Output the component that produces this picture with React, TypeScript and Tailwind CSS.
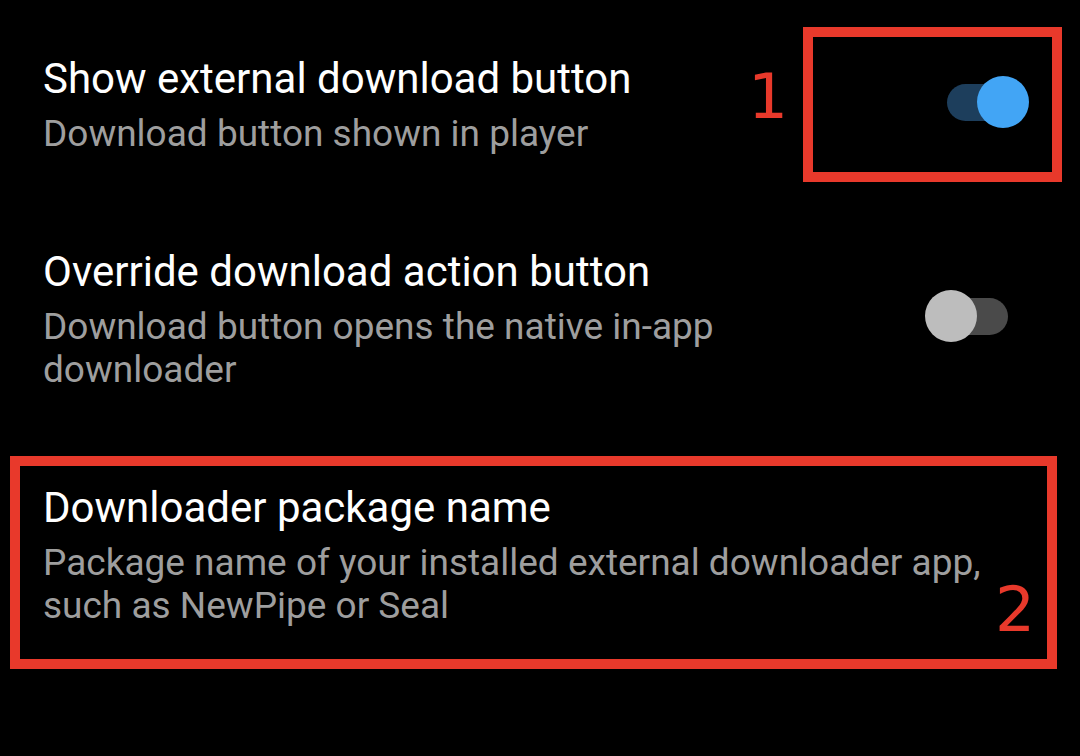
import React from "react";

function Toggle({ on }: { on: boolean }) {
  return on ? (
    <div className="relative w-[84px] h-[52px] flex items-center">
      <div className="ml-[2px] w-[74px] h-[37px] rounded-full bg-[#1d3e5c]" />
      <div className="absolute right-0 top-0 w-[52px] h-[52px] rounded-full bg-[#42a5f5]" />
    </div>
  ) : (
    <div className="relative w-[84px] h-[52px] flex items-center">
      <div className="ml-[14px] w-[69px] h-[37px] rounded-full bg-[#4a4a4a]" />
      <div className="absolute left-0 top-0 w-[52px] h-[52px] rounded-full bg-[#bdbdbd]" />
    </div>
  );
}

export default function App() {
  return (
    <div
      className="relative w-[1080px] h-[756px] bg-black overflow-hidden"
      style={{ fontFamily: "Roboto, 'Noto Sans', sans-serif" }}
    >
      <div className="flex flex-col pl-[43px] pt-[50px]">
        <div className="flex items-start">
          <div className="flex flex-col w-[840px]">
            <div className="text-[42px] leading-[58px] text-white whitespace-nowrap">Show external download button</div>
            <div className="mt-[4px] text-[37px] leading-[43px] text-[#9e9e9e]">Download button shown in player</div>
          </div>
          <div className="ml-[62px] mt-[26px]">
            <Toggle on />
          </div>
        </div>
        <div className="flex items-start mt-[88px]">
          <div className="flex flex-col w-[840px]">
            <div className="text-[42px] leading-[58px] text-white whitespace-nowrap">Override download action button</div>
            <div className="mt-[4px] text-[37px] leading-[43px] text-[#9e9e9e] w-[720px]">
              Download button opens the native in-app downloader
            </div>
          </div>
          <div className="ml-[42px] mt-[47px]">
            <Toggle on={false} />
          </div>
        </div>
        <div className="flex flex-col mt-[88px]">
          <div className="text-[42px] leading-[58px] text-white whitespace-nowrap">Downloader package name</div>
          <div className="mt-[4px] text-[37px] leading-[43px] text-[#9e9e9e] w-[950px]">
            Package name of your installed external downloader app, such as NewPipe or Seal
          </div>
        </div>
      </div>

      <div className="absolute left-[803px] top-[27px] w-[259px] h-[155px] border-[10px] border-[#e8392b]" />
      <div className="absolute left-[10px] top-[456px] w-[1047px] h-[213px] border-[10px] border-[#e8392b]" />
      <div
        className="absolute left-[748px] top-[62px] text-[63px] leading-[70px] text-[#e8392b]"
        style={{ fontFamily: "'DejaVu Sans', sans-serif" }}
      >
        1
      </div>
      <div
        className="absolute left-[995px] top-[575px] text-[63px] leading-[70px] text-[#e8392b]"
        style={{ fontFamily: "'DejaVu Sans', sans-serif" }}
      >
        2
      </div>
    </div>
  );
}
